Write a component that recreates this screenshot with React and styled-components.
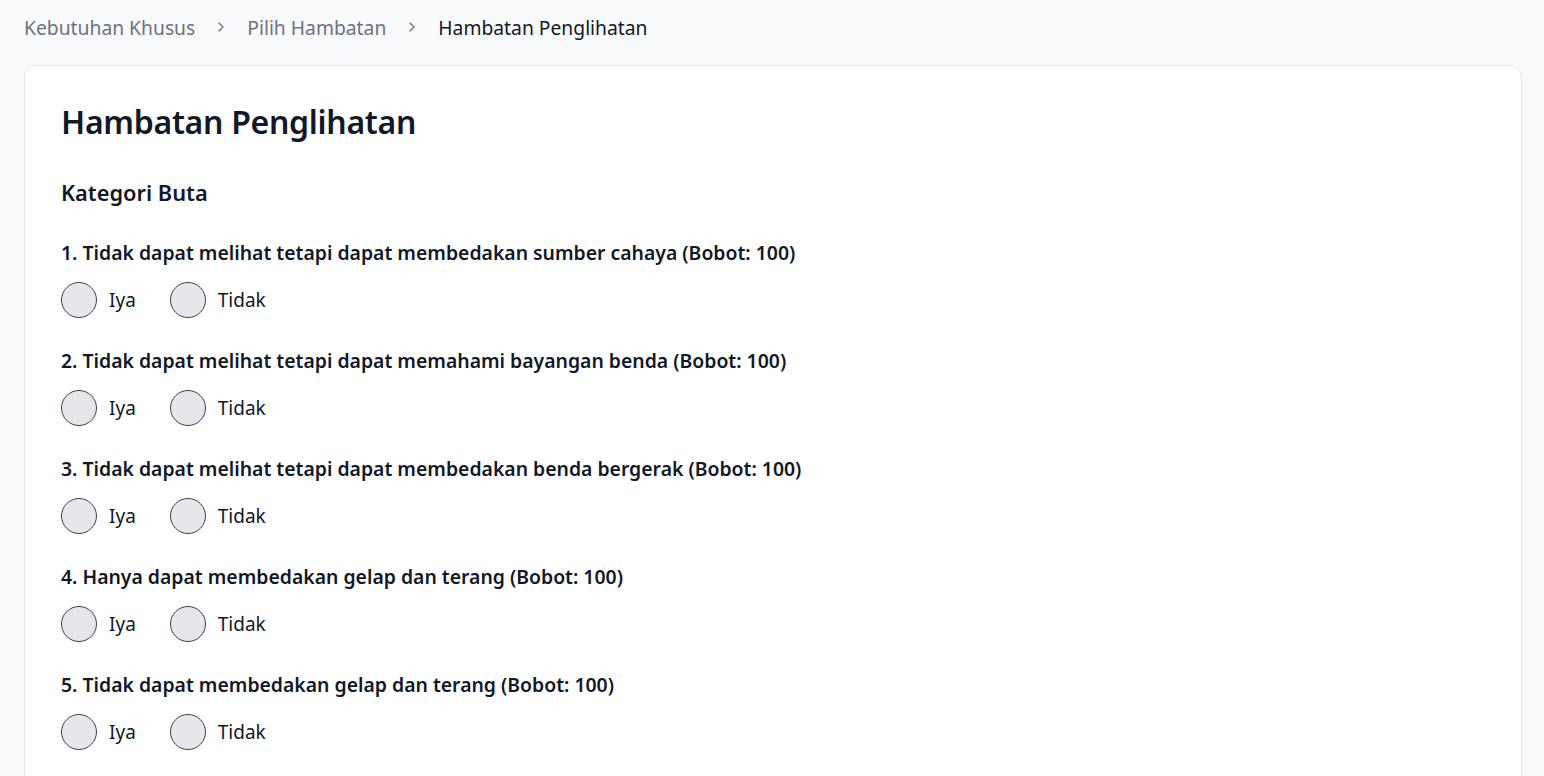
import React from "react";
import styled, { createGlobalStyle } from "styled-components";
import { ChevronRight } from "lucide-react";

const Global = createGlobalStyle`
  * { box-sizing: border-box; }
  html, body { margin: 0; padding: 0; background: #f9fafb; }
  body { font-family: "Noto Sans", "Open Sans", sans-serif; color: #111827; }
`;

const Page = styled.div`
  padding: 12px 22px 0 24px;
  min-height: 776px;
`;

const Breadcrumb = styled.nav`
  display: flex;
  align-items: center;
  gap: 18px;
  height: 30px;
  font-size: 19.3px;
`;

const Crumb = styled.span`
  color: ${(p) => (p.$current ? "#111827" : "#6b7280")};
`;

const Sep = styled.span`
  display: flex;
  color: #6b7280;
`;

const Card = styled.section`
  margin-top: 23px;
  background: #fff;
  border: 1px solid #e5e7eb;
  border-radius: 12px;
  padding: 34px 36px 40px;
  min-height: 720px;
`;

const Title = styled.h1`
  margin: 0;
  font-size: 32px;
  font-weight: 600;
  line-height: 44px;
  letter-spacing: -0.3px;
`;

const Category = styled.h2`
  margin: 34px 0 0;
  font-size: 21.8px;
  font-weight: 600;
  line-height: 30px;
`;

const Question = styled.div`
  margin-top: ${(p) => (p.$first ? "31px" : "29px")};
`;

const QText = styled.p`
  margin: 0;
  font-size: 19.4px;
  font-weight: 600;
  line-height: 28px;
`;

const Options = styled.div`
  display: flex;
  gap: 34px;
  margin-top: 15px;
`;

const Option = styled.label`
  display: flex;
  align-items: center;
  gap: 12px;
  font-size: 19px;
  cursor: pointer;
`;

const Radio = styled.input.attrs({ type: "radio" })`
  appearance: none;
  margin: 0;
  width: 36px;
  height: 36px;
  border-radius: 50%;
  background: #e5e7eb;
  border: 1.2px solid #374151;
`;

const questions = [
  "1. Tidak dapat melihat tetapi dapat membedakan sumber cahaya (Bobot: 100)",
  "2. Tidak dapat melihat tetapi dapat memahami bayangan benda (Bobot: 100)",
  "3. Tidak dapat melihat tetapi dapat membedakan benda bergerak (Bobot: 100)",
  "4. Hanya dapat membedakan gelap dan terang (Bobot: 100)",
  "5. Tidak dapat membedakan gelap dan terang (Bobot: 100)",
];

export default function App() {
  return (
    <>
      <Global />
      <Page>
        <Breadcrumb>
          <Crumb>Kebutuhan Khusus</Crumb>
          <Sep><ChevronRight size={16} /></Sep>
          <Crumb>Pilih Hambatan</Crumb>
          <Sep><ChevronRight size={16} /></Sep>
          <Crumb $current>Hambatan Penglihatan</Crumb>
        </Breadcrumb>
        <Card>
          <Title>Hambatan Penglihatan</Title>
          <Category>Kategori Buta</Category>
          {questions.map((q, i) => (
            <Question key={i} $first={i === 0}>
              <QText>{q}</QText>
              <Options>
                <Option><Radio name={`q${i}`} />Iya</Option>
                <Option><Radio name={`q${i}`} />Tidak</Option>
              </Options>
            </Question>
          ))}
        </Card>
      </Page>
    </>
  );
}
